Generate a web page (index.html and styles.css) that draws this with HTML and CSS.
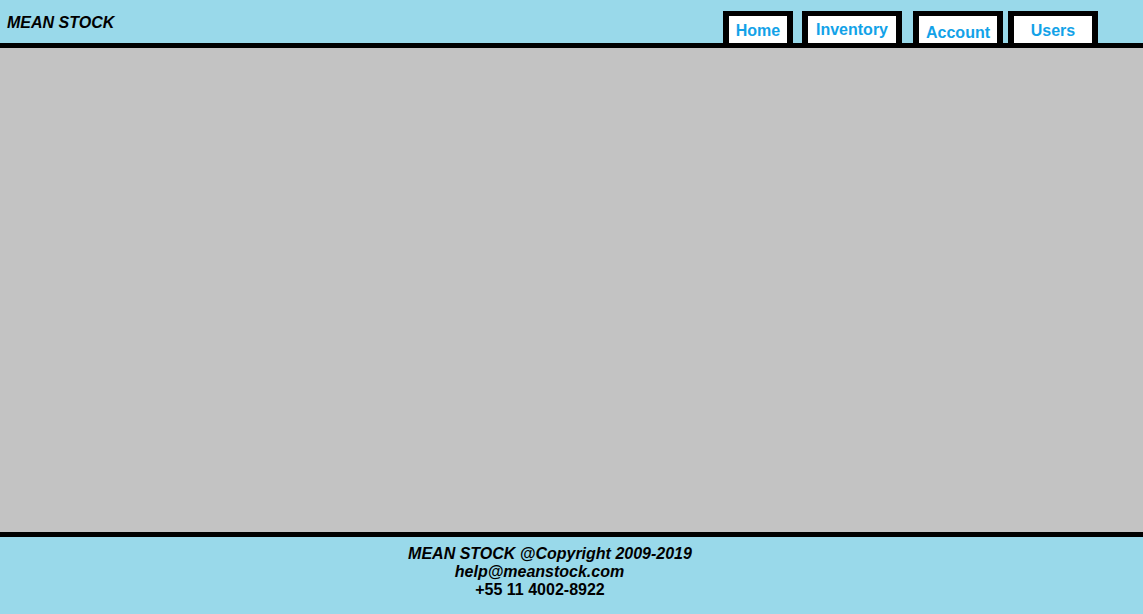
FILE: index.html
```html
<!DOCTYPE html>
<html lang="en">
<head>
    <meta charset="UTF-8">
    <meta name="viewport" content="width=device-width, initial-scale=1.0">
    <title>MEAN STOCK</title>
    <link rel="stylesheet" href="styles.css">
</head>
<body>
    <div class="topo">
        <h3 class="logo">MEAN STOCK</h3>
        <nav class="menu">
            <a class="aba aba-home" href="#">Home</a>
            <a class="aba aba-inv" href="#">Inventory</a>
            <a class="aba aba-acc" href="#">Account</a>
            <a class="aba aba-users" href="#">Users</a>
        </nav>
    </div>

    <div class="conteudo"></div>

    <div class="rodape">
        <p class="r1">MEAN STOCK @Copyright 2009-2019</p>
        <p class="r2">help@meanstock.com</p>
        <p class="r3">+55 11 4002-8922</p>
    </div>
</body>
</html>
```

FILE: styles.css
```css
html, body {
    height: 100%;
}

body {
    margin: 0;
    display: flex;
    flex-direction: column;
    font-family: "Liberation Sans", Arial, sans-serif;
}

.topo {
    background-color: #99d9ea;
    height: 43px;
    border-bottom: 5px solid black;
    display: flex;
    justify-content: space-between;
    align-items: flex-end;
}

.logo {
    margin: 0 0 auto 7px;
    padding-top: 14px;
    font-size: 16px;
    font-style: italic;
    font-weight: bold;
    color: black;
}

.menu {
    display: flex;
    align-items: flex-end;
    margin-right: 45px;
}

.aba {
    box-sizing: border-box;
    height: 32px;
    border: 6px solid black;
    border-top-width: 5px;
    border-bottom: none;
    background-color: white;
    color: #12a2e8;
    font-size: 16px;
    font-weight: bold;
    text-decoration: none;
    text-align: center;
    line-height: 16px;
}

.aba-home { width: 70px; padding-top: 7px; }
.aba-inv { width: 100px; margin-left: 9px; padding-top: 6px; }
.aba-acc { width: 90px; margin-left: 11px; padding-top: 9px; }
.aba-users { width: 90px; margin-left: 5px; padding-top: 7px; }

.conteudo {
    flex: 1;
    background-color: #c3c3c3;
}

.rodape {
    background-color: #99d9ea;
    border-top: 5px solid black;
    height: 82px;
    flex-shrink: 0;
    box-sizing: border-box;
    padding-top: 8px;
    text-align: center;
    font-size: 16px;
    font-weight: bold;
    color: black;
}

.rodape p {
    margin: 0;
    line-height: 18px;
}

.r1 { font-style: italic; padding-right: 43px; }
.r2 { font-style: italic; padding-right: 64px; }
.r3 { padding-right: 63px; }
```
